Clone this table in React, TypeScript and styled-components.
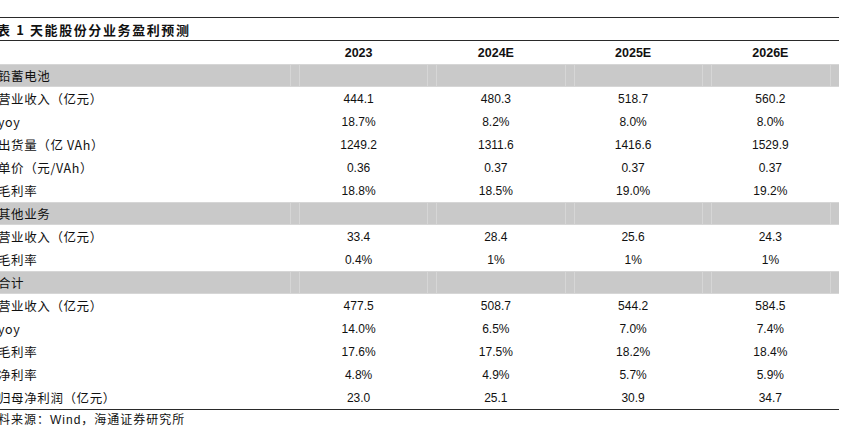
import React from 'react'
import styled, { createGlobalStyle, css } from 'styled-components'

const GlobalStyle = createGlobalStyle`
  html, body {
    margin: 0;
    padding: 0;
    background: #ffffff;
  }
  body {
    font-family: 'Liberation Sans', 'Noto Sans CJK SC', sans-serif;
    color: #111111;
  }
`

const Page = styled.div`
  width: 864px;
  height: 428px;
  overflow: hidden;
  padding-top: 17px;
  box-sizing: border-box;
`

const Sheet = styled.div`
  width: 839px;
`

const Title = styled.div`
  height: 24px;
  border-top: 1px solid #2a2a2a;
  border-bottom: 1px solid #2a2a2a;
  box-sizing: border-box;
  display: flex;
  align-items: center;
  margin-left: -3px;
  font-family: 'Noto Sans CJK SC', sans-serif;
  font-weight: 700;
  font-size: 13px;
  letter-spacing: 1.6px;
  white-space: pre;
`

const Row = styled.div<{ $section?: boolean }>`
  display: grid;
  grid-template-columns: 290px repeat(4, 137.25px);
  height: 23px;
  ${p =>
    p.$section &&
    css`
      background: #c9c9c9;
      box-shadow: inset 0 1px 0 #d6d6d6, inset 0 -1px 0 #d6d6d6;
    `}
`

const Label = styled.div`
  display: flex;
  align-items: center;
  margin-left: -2px;
  font-family: 'Noto Sans CJK SC', sans-serif;
  font-size: 12.5px;
  letter-spacing: 0.6px;
  white-space: nowrap;
`

const Cell = styled.div<{ $head?: boolean; $section?: boolean; $last?: boolean }>`
  display: flex;
  align-items: center;
  justify-content: center;
  font-family: 'Liberation Sans', sans-serif;
  font-size: ${p => (p.$head ? '12.5px' : '12px')};
  font-weight: ${p => (p.$head ? 700 : 400)};
  position: relative;
  ${p =>
    p.$section &&
    css`
      border-left: 1px solid #d6d6d6;
      &::before {
        content: '';
        position: absolute;
        left: 8px;
        top: 1px;
        bottom: 1px;
        width: 1px;
        background: #d6d6d6;
      }
    `}
  ${p =>
    p.$section &&
    p.$last &&
    css`
      &::after {
        content: '';
        position: absolute;
        right: 8px;
        top: 1px;
        bottom: 1px;
        width: 1px;
        background: #d6d6d6;
      }
    `}
`

const Bottom = styled.div`
  border-top: 1px solid #2a2a2a;
`

const Source = styled.div`
  height: 16px;
  display: flex;
  align-items: center;
  margin-left: -15px;
  font-family: 'Liberation Sans', 'Noto Sans CJK SC', sans-serif;
  font-size: 12px;
  letter-spacing: 1px;
  white-space: nowrap;
`

type Line = { label: string; values?: string[]; section?: boolean }

const lines: Line[] = [
  { label: '铅蓄电池', section: true },
  { label: '营业收入（亿元）', values: ['444.1', '480.3', '518.7', '560.2'] },
  { label: 'yoy', values: ['18.7%', '8.2%', '8.0%', '8.0%'] },
  { label: '出货量（亿 VAh）', values: ['1249.2', '1311.6', '1416.6', '1529.9'] },
  { label: '单价（元/VAh）', values: ['0.36', '0.37', '0.37', '0.37'] },
  { label: '毛利率', values: ['18.8%', '18.5%', '19.0%', '19.2%'] },
  { label: '其他业务', section: true },
  { label: '营业收入（亿元）', values: ['33.4', '28.4', '25.6', '24.3'] },
  { label: '毛利率', values: ['0.4%', '1%', '1%', '1%'] },
  { label: '合计', section: true },
  { label: '营业收入（亿元）', values: ['477.5', '508.7', '544.2', '584.5'] },
  { label: 'yoy', values: ['14.0%', '6.5%', '7.0%', '7.4%'] },
  { label: '毛利率', values: ['17.6%', '17.5%', '18.2%', '18.4%'] },
  { label: '净利率', values: ['4.8%', '4.9%', '5.7%', '5.9%'] },
  { label: '归母净利润（亿元）', values: ['23.0', '25.1', '30.9', '34.7'] },
]

const years = ['2023', '2024E', '2025E', '2026E']

const App = () => {
  return (
    <Page>
      <GlobalStyle />
      <Sheet>
        <Title>表 1 天能股份分业务盈利预测</Title>
        <Row>
          <Label />
          {years.map(y => (
            <Cell key={y} $head>
              {y}
            </Cell>
          ))}
        </Row>
        {lines.map((line, i) => (
          <Row key={i} $section={line.section}>
            <Label>{line.label}</Label>
            {(line.values ?? ['', '', '', '']).map((v, j) => (
              <Cell key={j} $section={line.section} $last={j === 3}>
                {v}
              </Cell>
            ))}
          </Row>
        ))}
        <Bottom />
        <Source>资料来源：Wind，海通证券研究所</Source>
      </Sheet>
    </Page>
  )
}

export default App
